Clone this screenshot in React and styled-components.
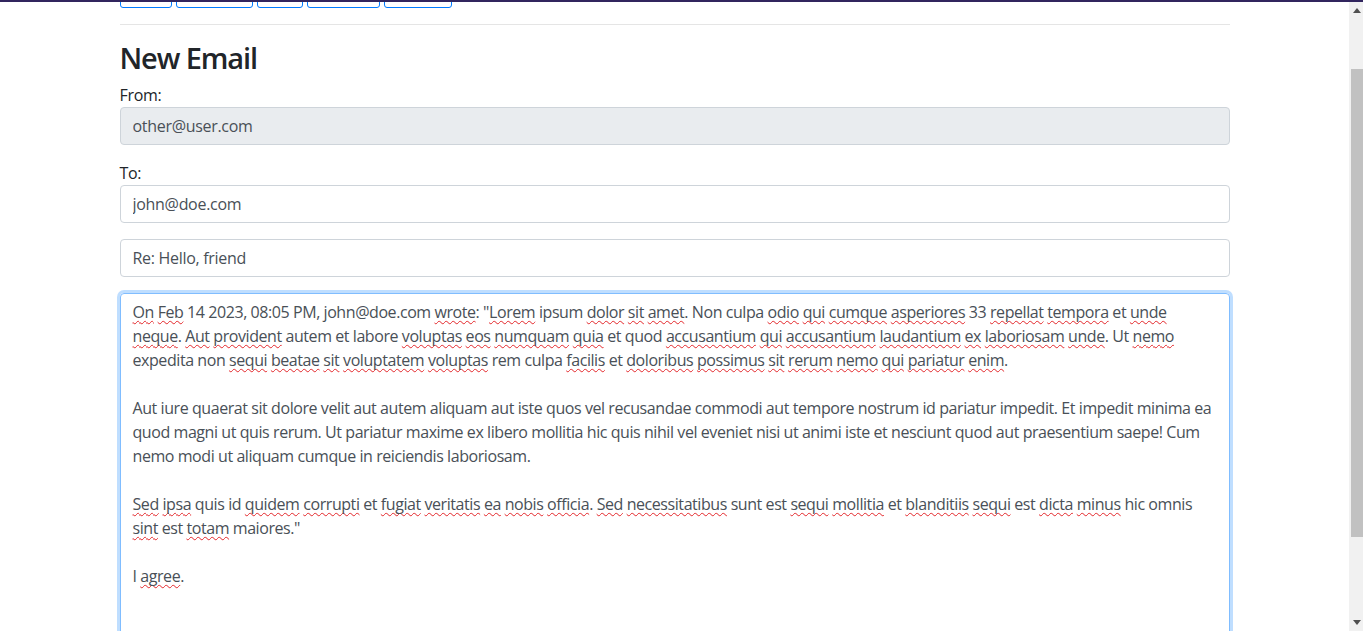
import styled, { createGlobalStyle } from "styled-components";
import { useLayoutEffect, useRef } from "react";

const GlobalStyle = createGlobalStyle`
  html, body {
    margin: 0;
    padding: 0;
    height: 100%;
    overflow: hidden;
  }

  body {
    font-family: "Segoe UI", "Open Sans", "Noto Sans", sans-serif;
    font-size: 16px;
    line-height: 1.5;
    letter-spacing: -0.3px;
    color: #212529;
    background: #fff;
  }

  * {
    box-sizing: border-box;
  }
`;

const toolbarButtons = [
  { label: "Inbox", width: 52 },
  { label: "Compose", width: 77 },
  { label: "Sent", width: 46 },
  { label: "Archived", width: 73 },
  { label: "Logout", width: 68 },
];

// words starting with * get the red spellcheck squiggle
const body = [
  [
    '*On *Feb 14 2023, 08:05 PM, john@doe.com *wrote: *"Lorem ipsum *dolor *sit *amet. Non culpa *odio *qui *cumque *asperiores 33 *repellat *tempora et *unde',
    "*neque. *Aut *provident autem et labore *voluptas *eos *numquam *quia et quod *accusantium *qui *accusantium *laudantium *ex *laboriosam *unde. Ut *nemo",
    "expedita non *sequi *beatae *sit *voluptatem *voluptas rem culpa *facilis et *doloribus *possimus *sit *rerum *nemo *qui *pariatur *enim.",
  ],
  [
    "Aut iure quaerat sit dolore velit aut autem aliquam aut iste quos vel recusandae commodi aut tempore nostrum id pariatur impedit. Et impedit minima ea",
    "quod magni ut quis rerum. Ut pariatur maxime ex libero mollitia hic quis nihil vel eveniet nisi ut animi iste et nesciunt quod aut praesentium saepe! Cum",
    "nemo modi ut aliquam cumque in reiciendis laboriosam.",
  ],
  [
    "*Sed *ipsa quis id *quidem *corrupti et *fugiat *veritatis *ea *nobis *officia. *Sed *necessitatibus sunt est *sequi *mollitia et *blanditiis *sequi est *dicta *minus hic omnis",
    '*sint est *totam maiores."',
  ],
  ["I *agree."],
];

const renderLine = (line) =>
  line.split(" ").map((token, i) => {
    const space = i > 0 ? " " : "";
    if (!token.startsWith("*")) return space + token;
    const m = token.slice(1).match(/^([^A-Za-z]*)([A-Za-z]+)(.*)$/);
    return (
      <span key={i}>
        {space}
        {m[1]}
        <Misspelled>{m[2]}</Misspelled>
        {m[3]}
      </span>
    );
  });

const App = () => {
  const areaRef = useRef(null);
  const toolbarRef = useRef(null);

  useLayoutEffect(() => {
    const t = toolbarRef.current;
    areaRef.current.scrollTop = t.offsetTop + t.offsetHeight - 6;
  }, []);

  return (
    <Screen>
      <GlobalStyle />
      <TopStrip />
      <Body>
        <ScrollArea ref={areaRef}>
          <Container>
            <Toolbar ref={toolbarRef}>
              {toolbarButtons.map((b) => (
                <OutlineButton key={b.label} $w={b.width}>
                  {b.label}
                </OutlineButton>
              ))}
            </Toolbar>
            <Rule />
            <Title>New Email</Title>
            <FormGroup>
              <Label>From:</Label>
              <Input value="other@user.com" disabled readOnly />
            </FormGroup>
            <FormGroup>
              <Label>To:</Label>
              <Input value="john@doe.com" readOnly />
            </FormGroup>
            <FormGroup>
              <Input value="Re: Hello, friend" readOnly />
            </FormGroup>
            <FormGroup>
              <MessageBox role="textbox" aria-multiline="true">
                {body.map((para, pi) => (
                  <Paragraph key={pi}>
                    {para.map((line, li) => (
                      <Line key={li}>{renderLine(line)}</Line>
                    ))}
                  </Paragraph>
                ))}
              </MessageBox>
            </FormGroup>
          </Container>
        </ScrollArea>
        <Scrollbar>
          <ScrollArrow>
            <svg width="8" height="5" viewBox="0 0 8 5">
              <path d="M0 5 L4 0 L8 5 Z" fill="#505050" />
            </svg>
          </ScrollArrow>
          <Track>
            <Thumb style={{ marginTop: 50, height: 468 }} />
          </Track>
          <ScrollArrow>
            <svg width="8" height="5" viewBox="0 0 8 5">
              <path d="M0 0 L8 0 L4 5 Z" fill="#505050" />
            </svg>
          </ScrollArrow>
        </Scrollbar>
      </Body>
    </Screen>
  );
};

export default App;

const Screen = styled.div`
  height: 631px;
  display: flex;
  flex-direction: column;
`;

const TopStrip = styled.div`
  height: 2px;
  flex-shrink: 0;
  background: #31255e;
`;

const Body = styled.div`
  flex: 1;
  display: flex;
  min-height: 0;
`;

const ScrollArea = styled.div`
  position: relative;
  flex: 1;
  overflow: hidden;
`;

const Container = styled.div`
  width: 1140px;
  margin: 0 auto;
  padding: 60px 15px 200px;
`;

const Toolbar = styled.div`
  display: flex;
  gap: 4px;
`;

const OutlineButton = styled.button`
  width: ${({ $w }) => $w}px;
  height: 31px;
  padding: 4px 8px;
  border: 1px solid #007bff;
  border-radius: 3px;
  background: transparent;
  color: #007bff;
  font-family: inherit;
  font-size: 14px;
  line-height: 21px;
`;

const Rule = styled.hr`
  margin: 16px 0 14px;
  border: 0;
  border-top: 1px solid rgba(0, 0, 0, 0.1);
`;

const Title = styled.h2`
  margin: 0 0 6px;
  font-size: 29px;
  font-weight: 600;
  line-height: 38.4px;
  letter-spacing: -1.1px;
  color: #212529;
`;

const FormGroup = styled.div`
  margin-bottom: 16px;
`;

const Label = styled.label`
  display: block;
  line-height: 24px;
`;

const Input = styled.input`
  display: block;
  width: 100%;
  height: 38px;
  padding: 6px 12px;
  border: 1px solid #ced4da;
  border-radius: 4px;
  background: #fff;
  color: #495057;
  font-family: inherit;
  font-size: 16px;
  line-height: 24px;
  letter-spacing: -0.3px;
  outline: none;

  &:disabled {
    background: #e9ecef;
    opacity: 1;
  }
`;

const MessageBox = styled.div`
  height: 420px;
  padding: 6px 12px;
  border: 1px solid #80bdff;
  border-radius: 4px;
  box-shadow: 0 0 0 3px rgba(0, 123, 255, 0.25);
  color: #495057;
  font-size: 16px;
  line-height: 24px;
  letter-spacing: -0.43px;
`;

const Paragraph = styled.div`
  & + & {
    margin-top: 24px;
  }
`;

const Line = styled.div`
  white-space: nowrap;
`;

const Misspelled = styled.span`
  text-decoration: underline wavy #e3262a;
  text-decoration-thickness: 1px;
  text-underline-offset: 2px;
  text-decoration-skip-ink: none;
`;

const Scrollbar = styled.div`
  width: 14px;
  flex-shrink: 0;
  display: flex;
  flex-direction: column;
  background: #f1f1f1;
`;

const ScrollArrow = styled.div`
  height: 17px;
  display: flex;
  align-items: center;
  justify-content: center;
  padding-left: 2px;
`;

const Track = styled.div`
  flex: 1;
  padding-left: 2px;
`;

const Thumb = styled.div`
  background: #c1c1c1;
`;
